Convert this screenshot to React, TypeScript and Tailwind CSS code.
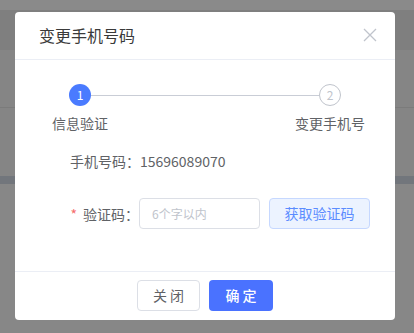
import { useState } from 'react';

const FONT = "font-['Noto_Sans_CJK_SC','Noto_Sans',sans-serif]";

function Steps() {
  return (
    <div className="pt-6">
      <div className="ml-[54px] flex w-[272px] items-center">
        <span className="flex h-[22px] w-[22px] items-center justify-center rounded-full bg-[#4a7bff] text-[12px] leading-none text-white">
          1
        </span>
        <span className="h-px flex-1 bg-[#c9cdd6]" />
        <span className="flex h-[22px] w-[22px] items-center justify-center rounded-full border border-[#c0c4cc] text-[12px] leading-none text-[#c0c4cc]">
          2
        </span>
      </div>
      <div className="ml-[37px] mt-[6px] flex w-[313px] justify-between text-[14px] leading-[22px] text-[#606266]">
        <span>信息验证</span>
        <span>变更手机号</span>
      </div>
    </div>
  );
}

function ChangePhoneDialog() {
  const [code, setCode] = useState('');

  return (
    <div className={`flex h-[308px] w-[380px] flex-col rounded bg-white ${FONT}`}>
      <div className="flex h-[48px] items-center justify-between border-b border-[#ebeef5] px-6 pb-px">
        <h2 className="text-[16px] leading-6 text-[#3a3a3a]">变更手机号码</h2>
        <button type="button" className="-mr-[6px] text-[#c0c4cc]">
          <svg width="14" height="14" viewBox="0 0 14 14" fill="none" stroke="currentColor" strokeWidth="1.3">
            <path d="M1 1l12 12M13 1L1 13" />
          </svg>
        </button>
      </div>

      <div className="flex-1">
        <Steps />

        <div className="mt-[17px] flex text-[14px] leading-5 text-[#606266]">
          <span className="w-[125px] pl-[55px]">手机号码：</span>
          <span>15696089070</span>
        </div>

        <div className="mt-[27px] flex items-center">
          <label className="w-[124px] text-right text-[14px] leading-5 text-[#606266]">
            <span className="mr-[6px] text-[#f56c6c]">*</span>验证码：
          </label>
          <input
            value={code}
            onChange={(e) => setCode(e.target.value)}
            placeholder="6个字以内"
            className="h-[31px] w-[121px] rounded border border-[#dcdfe6] px-3 text-[12px] text-[#606266] outline-none placeholder:text-[#c0c4cc]"
          />
          <button
            type="button"
            className="ml-[9px] h-[31px] w-[101px] rounded border border-[#c6d8ff] bg-[#ecf3ff] text-[14px] text-[#5b8cff]"
          >
            获取验证码
          </button>
        </div>
      </div>

      <div className="flex h-[49px] items-start justify-center gap-[9px] border-t border-[#ebeef5] pt-[8px]">
        <button
          type="button"
          className="h-[31px] w-[63px] rounded border border-[#dcdfe6] bg-white text-[14px] text-[#606266]"
        >
          关 闭
        </button>
        <button
          type="button"
          className="h-[31px] w-[64px] rounded bg-[#4a72ff] text-[14px] font-medium text-white"
        >
          确 定
        </button>
      </div>
    </div>
  );
}

export default function App() {
  return (
    <div className="relative h-[333px] w-[414px] overflow-hidden bg-[#878787]">
      <div className="h-[10px] bg-[#8a8a8a]" />
      <div className="h-[40px] bg-[#7f7f7f]" />
      <div className="h-[57px] bg-[#858585]" />
      <div className="h-px bg-[#7b7b7b]" />
      <div className="h-[68px] bg-[#858585]" />
      <div className="h-[8px] bg-[#72767c]" />

      <div className="absolute left-[15px] top-[12px]">
        <ChangePhoneDialog />
      </div>
    </div>
  );
}
